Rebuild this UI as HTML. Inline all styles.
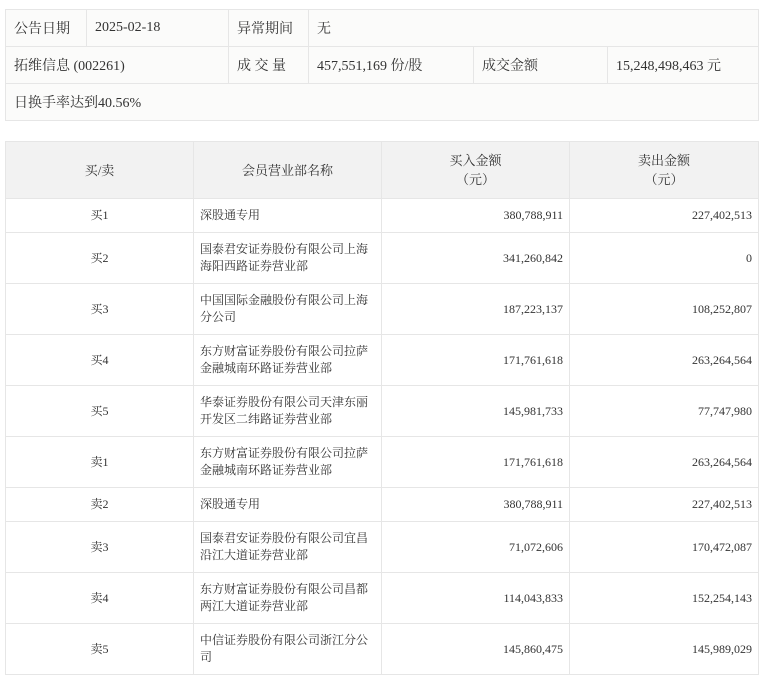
<!DOCTYPE html>
<html><head><meta charset="utf-8"><style>
body{margin:0;background:#fff;font-family:"Liberation Serif","Noto Serif CJK SC",serif;color:#333;}
table{border-collapse:collapse;position:absolute;table-layout:fixed;}
td{border:1px solid #e6e6e6;padding:0;vertical-align:middle;}
#t1{left:5px;top:9px;width:753px;background:#fbfbfa;font-size:14px;}
#t1 td{height:36px;padding-left:8px;}
#t2{left:5px;top:141px;width:753px;font-size:12px;}
#t2 th{background:#f2f2f2;border:1px solid #e6e6e6;font-weight:normal;font-size:13px;height:56px;line-height:19px;padding:0;}
#t2 td{line-height:17px;}
#t2 td:nth-child(1){text-align:center;}
#t2 td:nth-child(2){padding-left:6px;padding-right:10px;}
#t2 td:nth-child(3),#t2 td:nth-child(4){text-align:right;padding-right:6px;}
.s td{height:33px}.d td{height:50px}
</style></head><body>
<table id="t1">
<colgroup><col style="width:81px"><col style="width:142px"><col style="width:80px"><col style="width:165px"><col style="width:134px"><col style="width:151px"></colgroup>
<tr><td>公告日期</td><td>2025-02-18</td><td>异常期间</td><td colspan="3">无</td></tr>
<tr><td colspan="2">拓维信息 (002261)</td><td>成 交 量</td><td>457,551,169 份/股</td><td>成交金额</td><td>15,248,498,463 元</td></tr>
<tr><td colspan="6">日换手率达到40.56%</td></tr>
</table>
<table id="t2">
<colgroup><col style="width:188px"><col style="width:188px"><col style="width:188px"><col style="width:189px"></colgroup>
<tr><th>买/卖</th><th>会员营业部名称</th><th>买入金额<br>（元）</th><th>卖出金额<br>（元）</th></tr>
<tr class="s"><td>买1</td><td>深股通专用</td><td>380,788,911</td><td>227,402,513</td></tr>
<tr class="d"><td>买2</td><td>国泰君安证券股份有限公司上海<br>海阳西路证券营业部</td><td>341,260,842</td><td>0</td></tr>
<tr class="d"><td>买3</td><td>中国国际金融股份有限公司上海<br>分公司</td><td>187,223,137</td><td>108,252,807</td></tr>
<tr class="d"><td>买4</td><td>东方财富证券股份有限公司拉萨<br>金融城南环路证券营业部</td><td>171,761,618</td><td>263,264,564</td></tr>
<tr class="d"><td>买5</td><td>华泰证券股份有限公司天津东丽<br>开发区二纬路证券营业部</td><td>145,981,733</td><td>77,747,980</td></tr>
<tr class="d"><td>卖1</td><td>东方财富证券股份有限公司拉萨<br>金融城南环路证券营业部</td><td>171,761,618</td><td>263,264,564</td></tr>
<tr class="s"><td>卖2</td><td>深股通专用</td><td>380,788,911</td><td>227,402,513</td></tr>
<tr class="d"><td>卖3</td><td>国泰君安证券股份有限公司宜昌<br>沿江大道证券营业部</td><td>71,072,606</td><td>170,472,087</td></tr>
<tr class="d"><td>卖4</td><td>东方财富证券股份有限公司昌都<br>两江大道证券营业部</td><td>114,043,833</td><td>152,254,143</td></tr>
<tr class="d"><td>卖5</td><td>中信证券股份有限公司浙江分公<br>司</td><td>145,860,475</td><td>145,989,029</td></tr>
</table>
</body></html>
